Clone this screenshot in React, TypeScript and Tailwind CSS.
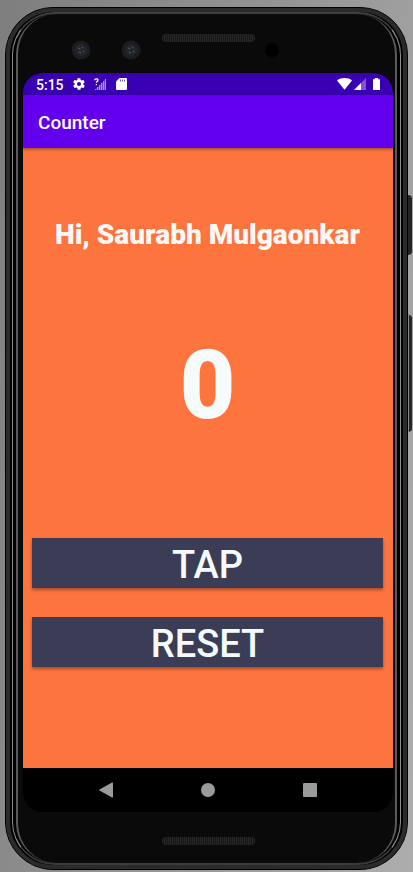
import { useState } from "react";

function Camera() {
  return (
    <svg className="size-5" viewBox="0 0 20 20" aria-hidden="true">
      <circle cx="10" cy="10" r="9.5" fill="#1b1d20" />
      <circle cx="10" cy="10" r="6" fill="#23272d" />
      <path d="M7 8l2 1M8 12l2 1M11 8l1-1M12 12l1-1" stroke="#4d5560" strokeWidth="1.2" />
    </svg>
  );
}

function Grille() {
  return (
    <div className="h-2 w-[93px] rounded-sm bg-[repeating-linear-gradient(90deg,#262626_0_1px,#181818_1px_2px)]" />
  );
}

function StatusBar() {
  return (
    <div className="flex h-[22px] items-center bg-[#3a00b3] pr-3 pl-[13px] text-white">
      <span className="w-9 pt-px text-sm leading-none font-medium">5:15</span>
      <svg className="size-3.5" viewBox="0 0 24 24" fill="currentColor" aria-hidden="true">
        <path d="M19.4 13c0-.3.1-.6.1-1s0-.7-.1-1l2.1-1.6c.2-.2.2-.4.1-.6l-2-3.5c-.1-.2-.4-.3-.6-.2l-2.5 1c-.5-.4-1.1-.7-1.7-1l-.4-2.6c0-.3-.2-.5-.5-.5h-4c-.2 0-.4.2-.5.4l-.4 2.7c-.6.2-1.1.6-1.7 1l-2.5-1c-.2-.1-.5 0-.6.2l-2 3.4c-.1.3 0 .5.2.7L4.6 11c0 .3-.1.6-.1 1s0 .7.1 1l-2.1 1.6c-.2.2-.2.4-.1.7l2 3.4c.1.2.4.3.6.2l2.5-1c.5.4 1.1.7 1.7 1l.4 2.7c0 .2.2.4.5.4h4c.3 0 .5-.2.5-.4l.4-2.7c.6-.2 1.1-.6 1.7-1l2.5 1c.2.1.5 0 .6-.2l2-3.4c.1-.3 0-.5-.1-.7L19.4 13zM12 15.5a3.5 3.5 0 1 1 0-7 3.5 3.5 0 0 1 0 7z" />
      </svg>
      <svg className="ml-2 h-3 w-3" viewBox="0 0 12 12" aria-hidden="true">
        <path d="M1 12L11 2v10z" fill="#a98be0" opacity=".5" />
        <path d="M1 12h1v-1H1zM3 12h1V9H3zM5 12h1V7H5zM7 12h1V5H7zM9 12h1V3H9zM11 12h1V1h-1z" fill="#a98be0" />
        <path d="M.7 2.3C.7.3 4 .3 4 2.2 4 3.5 2.4 3.3 2.4 4.8M2.4 6v1.3" fill="none" stroke="#fff" strokeWidth="1.3" />
      </svg>
      <svg className="ml-2.5 h-3 w-[11px]" viewBox="0 0 11 12" aria-hidden="true">
        <path d="M3.5 0H10a1 1 0 0 1 1 1v10a1 1 0 0 1-1 1H1a1 1 0 0 1-1-1V3.5z" fill="#fff" />
        <path d="M4 1.5h1v2H4zM6 1.5h1v2H6zM8 1.5h1v2H8z" fill="#7a4fd0" />
      </svg>
      <svg className="ml-auto h-3 w-[15px]" viewBox="0 0 15 12" aria-hidden="true">
        <path d="M0 2.5C4-.7 11-.7 15 2.5L7.5 11.7z" fill="#fff" />
      </svg>
      <svg className="ml-0.5 size-3" viewBox="0 0 12 12" aria-hidden="true">
        <path d="M0 12L12 0v12z" fill="#7d55d4" />
        <path d="M0 12l7-7v7z" fill="#fff" />
      </svg>
      <svg className="ml-1.5 h-3 w-[9px]" viewBox="0 0 9 12" aria-hidden="true">
        <path d="M1 1.2h1.8V0h3.4v1.2H8V12H1z" fill="#fff" />
      </svg>
    </div>
  );
}

function ActionButton({ label, onClick }: { label: string; onClick: () => void }) {
  return (
    <button
      type="button"
      onClick={onClick}
      className="w-full bg-[#3a3d55] pt-1 text-[38px] leading-[46px] font-medium text-[#f4fafd] shadow-[0_2px_3px_rgba(0,0,0,0.35)]"
    >
      {label}
    </button>
  );
}

function NavigationBar() {
  return (
    <nav className="flex h-11 items-center justify-center gap-[60px] bg-black" aria-label="System">
      <button type="button" aria-label="Back" className="flex w-[42px] justify-center">
        <svg className="h-4 w-3.5" viewBox="0 0 14 16" fill="#9b9b9b">
          <path d="M13 0.5q1-.3 1 .8v13.4q0 1.1-1 .8L.5 8.6q-.8-.6 0-1.2z" />
        </svg>
      </button>
      <button type="button" aria-label="Home" className="flex w-[42px] justify-center">
        <span className="size-3.5 rounded-full bg-[#9b9b9b]" />
      </button>
      <button type="button" aria-label="Recent apps" className="flex w-[42px] justify-center">
        <span className="size-3.5 rounded-[1px] bg-[#9b9b9b]" />
      </button>
    </nav>
  );
}

function CounterApp() {
  const [count, setCount] = useState(0);
  return (
    <div className="flex flex-1 flex-col overflow-hidden rounded-[20px]">
      <StatusBar />
      <header className="z-10 flex h-[53px] items-center bg-[#6200ee] px-[15px] pt-0.5 shadow-[0_1px_3px_rgba(0,0,0,0.45)]">
        <h1 className="text-[19px] leading-6 font-medium text-white">Counter</h1>
      </header>
      <main className="flex flex-1 flex-col bg-[#fd743e] pr-2.5 pl-[9px] pt-[71px] text-center">
        <p className="text-[28px] leading-8 font-black whitespace-nowrap text-[#fdf8f6]">Hi, Saurabh Mulgaonkar</p>
        <output className="mt-[78px] text-[96px] leading-[112px] font-black text-[#f6faf9]">{count}</output>
        <div className="mt-[97px] flex flex-col gap-[29px]">
          <ActionButton label="TAP" onClick={() => setCount(count + 1)} />
          <ActionButton label="RESET" onClick={() => setCount(0)} />
        </div>
      </main>
      <NavigationBar />
    </div>
  );
}

export default function App() {
  return (
    <div className="flex min-h-screen bg-[linear-gradient(100deg,#7e7e7e,#949494_50%,#adadad)] pt-[7px] pr-[5px] pb-0.5 pl-[5px] font-[Roboto,sans-serif]">
      <div className="relative flex flex-1 flex-col rounded-[48px] border border-black bg-black">
        <div className="absolute top-[187px] -right-[5px] h-[60px] w-1 rounded-r-sm bg-[#252525]" />
        <div className="absolute top-[306px] -right-[5px] h-[118px] w-1 rounded-r-sm border-t border-l border-[#8a8a8a] bg-[#252525]" />
        <div className="flex flex-1 flex-col rounded-[47px] border-4 border-[#2b2b2b] px-0.5">
          <div className="flex flex-1 flex-col rounded-[43px] border-x border-t-2 border-b-2 border-x-[#8c8c8c] border-t-[#404040] border-b-[#3a3a3a] px-[3px]">
            <div className="flex flex-1 flex-col rounded-[40px] border-x-2 border-[#5a5a5a] bg-[#0a0a0a] pr-0.5 pl-[5px]">
              <div className="grid h-[59px] grid-cols-[1fr_93px_1fr]">
                <div className="flex gap-[30px] pt-[26px] pl-12">
                  <Camera />
                  <Camera />
                </div>
                <div className="pt-5">
                  <Grille />
                </div>
                <div className="pt-[29px] pl-2.5">
                  <div className="size-3.5 rounded-full bg-black" />
                </div>
              </div>
              <CounterApp />
              <div className="flex h-[51px] justify-center pt-[25px]">
                <Grille />
              </div>
            </div>
          </div>
        </div>
      </div>
    </div>
  );
}
